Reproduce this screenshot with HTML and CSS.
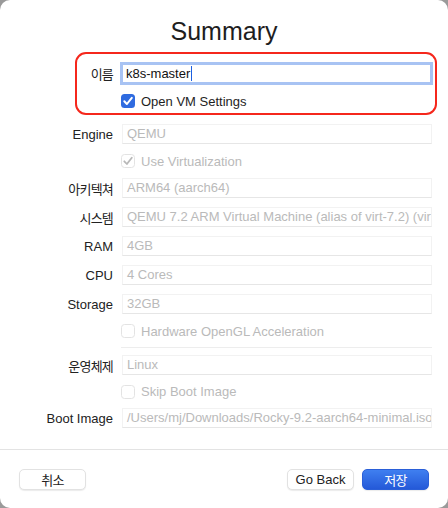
FILE: index.html
```html
<!DOCTYPE html>
<html>
<head>
<meta charset="utf-8">
<link rel="stylesheet" href="styles.css">
</head>
<body>
<div class="window">
  <h1 class="title">Summary</h1>

  <div class="highlight">
    <div class="row field-row">
      <label class="label ko">이름</label>
      <div class="input focused">k8s-master<span class="caret"></span></div>
    </div>
    <div class="row check-row">
      <span class="label"></span>
      <span class="check on"><svg viewBox="0 0 14 14" width="14" height="14"><path d="M3.3 7.3 L5.9 10 L10.8 3.8" fill="none" stroke="#fff" stroke-width="2" stroke-linecap="round" stroke-linejoin="round"/></svg></span>
      <span class="check-text">Open VM Settings</span>
    </div>
  </div>

  <div class="form">
    <div class="row field-row"><span class="label">Engine</span><div class="input disabled">QEMU</div></div>
    <div class="row check-row"><span class="label"></span><span class="check off"><svg viewBox="0 0 14 14" width="14" height="14"><path d="M3.3 7.3 L5.9 10 L10.8 3.8" fill="none" stroke="#b8b8b8" stroke-width="1.8" stroke-linecap="round" stroke-linejoin="round"/></svg></span><span class="check-text dim">Use Virtualization</span></div>
    <div class="row field-row"><span class="label ko">아키텍쳐</span><div class="input disabled">ARM64 (aarch64)</div></div>
    <div class="row field-row"><span class="label ko">시스템</span><div class="input disabled">QEMU 7.2 ARM Virtual Machine (alias of virt-7.2) (virt)</div></div>
    <div class="row field-row"><span class="label">RAM</span><div class="input disabled">4GB</div></div>
    <div class="row field-row"><span class="label">CPU</span><div class="input disabled">4 Cores</div></div>
    <div class="row field-row"><span class="label">Storage</span><div class="input disabled">32GB</div></div>
    <div class="row check-row"><span class="label"></span><span class="check off"></span><span class="check-text dim">Hardware OpenGL Acceleration</span></div>
    <div class="row rule-row"><span class="label"></span><span class="rule"></span></div>
    <div class="row field-row"><span class="label ko">운영체제</span><div class="input disabled">Linux</div></div>
    <div class="row check-row short"><span class="label"></span><span class="check off"></span><span class="check-text dim">Skip Boot Image</span></div>
    <div class="row field-row"><span class="label">Boot Image</span><div class="input disabled">/Users/mj/Downloads/Rocky-9.2-aarch64-minimal.iso</div></div>
  </div>

  <div class="footer">
    <button class="btn ko">취소</button>
    <div class="spacer"></div>
    <button class="btn">Go Back</button>
    <button class="btn primary ko">저장</button>
  </div>
</div>
</body>
</html>
```

FILE: styles.css
```css
* { box-sizing: border-box; }
html { background: #9a9a9a; }
body {
  margin: 0;
  font-family: "Liberation Sans", "Noto Sans CJK KR", sans-serif;
  font-size: 13px;
  color: #222;
}
.window {
  width: 448px;
  height: 508px;
  background: #fff;
  border-radius: 10px;
  overflow: hidden;
  display: flex;
  flex-direction: column;
}
.title {
  margin: 0;
  padding-top: 16px;
  font-size: 25px;
  line-height: 30px;
  font-weight: 400;
  text-align: center;
  color: #1e1e1e;
}
.highlight {
  margin: 6px 0 0 75px;
  width: 362px;
  height: 63px;
  border: 2px solid #f5271c;
  border-radius: 11px;
  padding-top: 9px;
  display: flex;
  flex-direction: column;
  gap: 10px;
}
.highlight .label { width: 36px; }
.highlight .input { width: 307px; margin-left: 1px; }
.row {
  display: flex;
  align-items: center;
}
.label {
  width: 113px;
  flex: none;
  text-align: right;
  color: #222;
  margin-right: 9px;
  white-space: nowrap;
}
.ko { letter-spacing: -0.8px; }
.form {
  margin-top: 9px;
  display: flex;
  flex-direction: column;
  gap: 9px;
}
.field-row { height: 20px; }
.check-row { height: 16px; }
.check-row.short { height: 15px; }
.rule-row { height: 1px; margin: -1px 0 -2px; }
.rule { width: 311px; height: 1px; background: #ededed; margin-left: -1px; }
.input {
  width: 310px;
  height: 20px;
  line-height: 20px;
  padding-left: 4px;
  white-space: nowrap;
  overflow: hidden;
}
.input.focused {
  height: 17px;
  line-height: 17px;
  padding-left: 3px;
  color: #111;
  box-shadow: 0 0 0 3px #a8c3f3;
  position: relative;
}
.caret {
  display: inline-block;
  width: 1px;
  height: 15px;
  background: #1d5fe0;
  vertical-align: -3px;
  margin-left: 1px;
}
.input.disabled {
  color: #bababa;
  border: 1px solid #f2f2f2;
  border-bottom-color: #e6e6e6;
  line-height: 18px;
}
.check {
  width: 14px;
  height: 14px;
  border-radius: 3.5px;
  flex: none;
  display: flex;
  margin-left: -1px;
}
.check.on { background: #2f6be0; }
.check.off { border: 1px solid #e3e3e3; background: #fff; }
.check.off svg { margin: -1px; }
.check-text { margin-left: 6px; color: #222; }
.check-text.dim { color: #bababa; }
.highlight .check-text { color: #1e1e1e; }
.footer {
  margin-top: 21px;
  border-top: 1px solid #e3e3e3;
  display: flex;
  align-items: center;
  padding: 19px 19px 0 19px;
  gap: 8px;
}
.spacer { flex: 1; }
.btn {
  width: 67px;
  height: 21px;
  padding: 0;
  border: 1px solid #e2e2e2;
  border-radius: 5px;
  background: #fff;
  box-shadow: 0 1px 1px rgba(0,0,0,0.08);
  font-family: inherit;
  font-size: 13px;
  color: #222;
}
.btn.primary {
  background: linear-gradient(#3f7ff0, #2459d8);
  border-color: #2a5fd8;
  color: #fff;
}
```
